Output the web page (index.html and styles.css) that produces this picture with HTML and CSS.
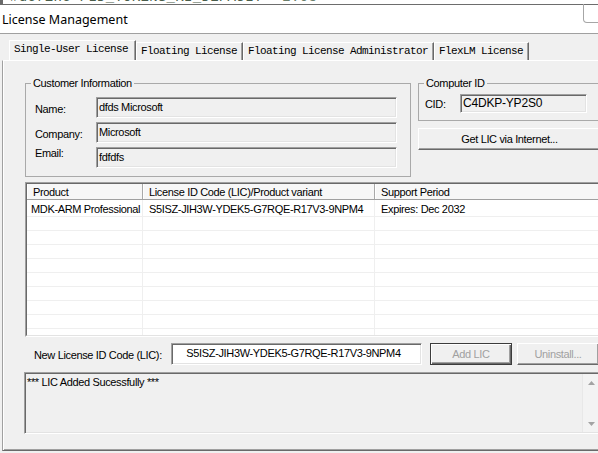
FILE: index.html
```html
<!DOCTYPE html>
<html>
<head>
<meta charset="utf-8">
<title>License Management</title>
<link rel="stylesheet" href="styles.css">
</head>
<body>
<div class="app">
  <div class="top-strip">
    <span class="code-box"></span>
    <span class="code">#define FLD_TOKENS_KI_DEFAULT</span>
    <span class="code ver">2.0s</span>
  </div>
  <div class="titlebar">
    <span class="title">License Management</span>
    <span class="close"></span>
  </div>
  <div class="dialog">
    <div class="tabs">
      <div class="tab active">Single-User License</div>
      <div class="tab">Floating License</div>
      <div class="tab">Floating License Administrator</div>
      <div class="tab">FlexLM License</div>
    </div>
    <div class="panel">
      <div class="top-row">
        <fieldset class="group customer">
          <legend>Customer Information</legend>
          <div class="form-row"><span class="label">Name:</span><div class="field">dfds Microsoft</div></div>
          <div class="form-row"><span class="label">Company:</span><div class="field">Microsoft</div></div>
          <div class="form-row"><span class="label raised">Email:</span><div class="field">fdfdfs</div></div>
        </fieldset>
        <div class="right-col">
          <fieldset class="group computer">
            <legend>Computer ID</legend>
            <div class="form-row cid"><span class="label">CID:</span><div class="field cid-field">C4DKP-YP2S0</div></div>
          </fieldset>
          <div class="button wide">Get LIC via Internet...</div>
        </div>
      </div>

      <div class="table">
        <div class="table-inner">
          <div class="t-head">
            <div class="th">Product</div>
            <div class="th">License ID Code (LIC)/Product variant</div>
            <div class="th">Support Period</div>
          </div>
          <div class="t-row first">
            <div class="td prod">MDK-ARM Professional</div>
            <div class="td">S5ISZ-JIH3W-YDEK5-G7RQE-R17V3-9NPM4</div>
            <div class="td">Expires: Dec 2032</div>
          </div>
          <div class="t-row"><div class="td"></div><div class="td"></div><div class="td"></div></div>
          <div class="t-row"><div class="td"></div><div class="td"></div><div class="td"></div></div>
          <div class="t-row"><div class="td"></div><div class="td"></div><div class="td"></div></div>
          <div class="t-row"><div class="td"></div><div class="td"></div><div class="td"></div></div>
          <div class="t-row"><div class="td"></div><div class="td"></div><div class="td"></div></div>
          <div class="t-row"><div class="td"></div><div class="td"></div><div class="td"></div></div>
          <div class="t-row"><div class="td"></div><div class="td"></div><div class="td"></div></div>
          <div class="t-row"><div class="td"></div><div class="td"></div><div class="td"></div></div>
          <div class="t-row"><div class="td"></div><div class="td"></div><div class="td"></div></div>
        </div>
      </div>

      <div class="lic-row">
        <span class="lic-label">New License ID Code (LIC):</span>
        <div class="field lic-field">S5ISZ-JIH3W-YDEK5-G7RQE-R17V3-9NPM4</div>
        <div class="button default disabled">Add LIC</div>
        <div class="button disabled">Uninstall...</div>
      </div>

      <div class="memo">
        <div class="memo-text">*** LIC Added Sucessfully ***</div>
        <div class="scrollbar">
          <div class="sb-btn"><svg width="7" height="4" viewBox="0 0 7 4"><path d="M3.5 0 L7 4 L0 4 Z" fill="#a3a3a3"/></svg></div>
          <div class="sb-track"></div>
          <div class="sb-btn"><svg width="7" height="4" viewBox="0 0 7 4"><path d="M0 0 L7 0 L3.5 4 Z" fill="#a3a3a3"/></svg></div>
        </div>
      </div>
    </div>
  </div>
</div>
</body>
</html>
```

FILE: styles.css
```css
html, body {
  margin: 0;
  padding: 0;
}
body {
  width: 598px;
  height: 453px;
  overflow: hidden;
  background: #f0f0f0;
  font-family: "Liberation Sans", Arial, sans-serif;
  font-size: 11px;
  letter-spacing: -0.35px;
  color: #000;
}
.app {
  width: 620px;
}

/* strip of the editor behind the dialog */
.top-strip {
  height: 4px;
  overflow: hidden;
  background: #fff;
  display: flex;
  align-items: flex-start;
}
.code-box {
  width: 3px;
  height: 4px;
  margin-right: 7px;
  background: #6a6a6a;
}
.code {
  font-family: "Liberation Mono", monospace;
  font-size: 14px;
  letter-spacing: 0.3px;
  line-height: 14px;
  margin-top: -10px;
  color: #4a5d4a;
  white-space: pre;
}
.ver {
  margin-left: 20px;
  color: #6c7f6c;
}

/* window title */
.titlebar {
  position: relative;
  height: 28px;
  border-top: 1px solid #6d6d6d;
  border-bottom: 1px solid #a0a0a0;
  background: #fff;
  display: flex;
  align-items: center;
  padding-left: 2px;
}
.title {
  font-family: "Noto Sans", "Liberation Sans", sans-serif;
  font-size: 12.5px;
  letter-spacing: 0;
  color: #000;
  margin-top: 1px;
}
.close {
  position: absolute;
  left: 583px;
  top: -1px;
  width: 24px;
  height: 18px;
  border: 1px solid #a6a6a6;
  border-top: none;
  border-radius: 0 0 0 4px;
}

/* dialog & tabs */
.dialog {
  padding: 6px 0 0 2px;
}
.tabs {
  display: flex;
  align-items: flex-end;
  height: 20px;
  margin-left: 7px;
}
.tab {
  box-sizing: border-box;
  height: 18px;
  line-height: 17px;
  padding: 0 5px 0 4px;
  font-family: "Liberation Mono", monospace;
  font-size: 11px;
  letter-spacing: -0.6px;
  white-space: pre;
  border-top: 1px solid #fff;
  border-left: 1px solid #fff;
  border-right: 1px solid #696969;
  box-shadow: inset -1px 0 0 #a0a0a0;
  background: #f0f0f0;
}
.tab.active {
  height: 20px;
  line-height: 16px;
  padding: 0 7px 0 4px;
}

.panel {
  box-sizing: border-box;
  width: 606px;
  height: 391px;
  border-top: 1px solid #fff;
  border-left: 1px solid #a0a0a0;
  border-bottom: 1px solid #696969;
  box-shadow: inset 1px 0 0 #fff, inset 0 -1px 0 #a0a0a0;
  padding: 16px 0 0 22px;
  display: flex;
  flex-direction: column;
  align-items: flex-start;
}

/* group boxes */
.top-row {
  display: flex;
  align-items: flex-start;
  gap: 7px;
}
.group {
  margin: 0;
  min-width: 0;
  box-sizing: border-box;
  border: 1px solid #a9a9a9;
}
.group legend {
  padding: 0 2px;
  line-height: 13px;
  color: #000;
}
.customer {
  width: 386px;
  padding: 7px 12px 8px 9px;
  display: flex;
  flex-direction: column;
  gap: 4px;
}
.customer legend {
  margin-left: -4px;
}
.form-row {
  display: flex;
  align-items: center;
}
.label {
  width: 61px;
  flex: none;
  margin-top: 2px;
}
.label.raised {
  margin-top: 0;
  margin-bottom: 9px;
}
.field {
  box-sizing: border-box;
  height: 21px;
  width: 301px;
  padding: 3px 2px 0 2px;
  line-height: 13px;
  white-space: nowrap;
  overflow: hidden;
  background: #f0f0f0;
  border: 1px solid;
  border-color: #a0a0a0 #fff #fff #a0a0a0;
  box-shadow: inset 1px 1px 0 #696969, inset -1px -1px 0 #e3e3e3;
}

.right-col {
  width: 186px;
  display: flex;
  flex-direction: column;
  gap: 7px;
}
.computer {
  width: 186px;
  padding: 4px 0 7px 6px;
}
.computer legend {
  margin-left: -1px;
}
.cid .label {
  width: 35px;
  margin-top: 0;
}
.cid-field {
  width: 127px;
  height: 19px;
  padding-top: 2px;
  font-size: 12px;
  letter-spacing: -0.2px;
}

/* buttons */
.button {
  box-sizing: border-box;
  height: 22px;
  line-height: 20px;
  text-align: center;
  background: #f0f0f0;
  border: 1px solid;
  border-color: #fff #696969 #696969 #fff;
  box-shadow: inset -1px -1px 0 #a0a0a0;
  white-space: nowrap;
}
.button.wide {
  width: 186px;
  padding-right: 3px;
}
.button.disabled {
  color: #a0a0a0;
  width: 82px;
}
.button.default {
  border: 1px solid #3c3c3c;
  box-shadow: inset 1px 1px 0 #fff, inset -1px -1px 0 #696969, inset -2px -2px 0 #a0a0a0;
}

/* list view */
.table {
  margin-top: 5px;
  box-sizing: border-box;
  width: 583px;
  height: 155px;
  border: 1px solid;
  border-color: #a0a0a0 #fff #fff #a0a0a0;
  background: #fff;
}
.table-inner {
  box-sizing: border-box;
  height: 100%;
  overflow: hidden;
  border: 1px solid;
  border-color: #696969 #e3e3e3 #e3e3e3 #696969;
}
.t-head,
.t-row {
  display: grid;
  grid-template-columns: 116px 232px 1fr;
  box-sizing: border-box;
}
.t-head {
  height: 16px;
  border-bottom: 1px solid #a0a0a0;
  background: #f7f7f7;
}
.th {
  padding: 1px 0 0 6px;
  line-height: 14px;
  border-right: 1px solid #a9a9a9;
  box-shadow: inset 1px 0 0 #fff;
  white-space: nowrap;
  overflow: hidden;
}
.t-row {
  height: 14px;
  border-bottom: 1px solid #efefef;
}
.t-row.first {
  height: 17px;
}
.td {
  border-right: 1px solid #efefef;
  padding: 3px 0 0 6px;
  line-height: 12px;
  white-space: nowrap;
  overflow: hidden;
}
.td.prod {
  padding-left: 4px;
}

/* new LIC row */
.lic-row {
  margin-top: 6px;
  margin-left: 9px;
  display: flex;
  align-items: center;
}
.lic-label {
  width: 137px;
  flex: none;
  margin-top: 2px;
}
.lic-field {
  width: 251px;
  height: 22px;
  background: #fff;
  text-align: center;
  padding: 3px 6px 0 0;
  margin-right: 8px;
}
.lic-row .button + .button {
  margin-left: 5px;
}

/* output memo */
.memo {
  margin-top: 7px;
  margin-left: -1px;
  box-sizing: border-box;
  width: 578px;
  height: 62px;
  display: flex;
  border: 1px solid;
  border-color: #a0a0a0 #fff #fff #a0a0a0;
  box-shadow: inset 1px 1px 0 #696969, inset -1px -1px 0 #e3e3e3;
  padding: 1px 1px 1px 1px;
}
.memo-text {
  flex: 1;
  padding: 2px 0 0 1px;
  line-height: 13px;
}
.scrollbar {
  width: 17px;
  display: flex;
  flex-direction: column;
  background: #f3f3f3;
  border-left: 1px solid #e8e8e8;
}
.sb-btn {
  height: 17px;
  display: flex;
  align-items: center;
  justify-content: center;
}
.sb-track {
  flex: 1;
}
```
